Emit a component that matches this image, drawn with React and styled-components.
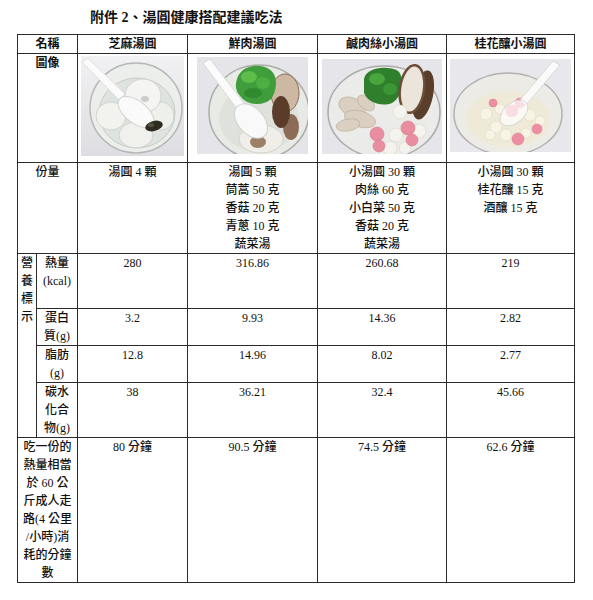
import styled, { createGlobalStyle } from 'styled-components';

const GlobalStyle = createGlobalStyle`
  body {
    margin: 0;
    background: #ffffff;
  }
`;

const Page = styled.div`
  padding: 8px 0 16px 17px;
  color: #111;
  font-family: "Liberation Serif", "Noto Sans CJK TC", serif;
`;

const Title = styled.h1`
  margin: 0 0 6px 73px;
  font-size: 14px;
  line-height: 20px;
  font-weight: 700;
`;

const Table = styled.table`
  border-collapse: collapse;
  table-layout: fixed;
  width: 557px;
`;

const Row = styled.tr`
  height: ${p => p.$h}px;
`;

const Cell = styled.td`
  border: 1px solid #2b2b2b;
  padding: 0 2px;
  vertical-align: top;
  text-align: center;
  font-size: 12px;
  line-height: 18px;
  font-weight: 500;
  white-space: nowrap;
`;

const HeadCell = styled(Cell)`
  vertical-align: middle;
  font-weight: 700;
`;

const PicCell = styled(Cell)`
  padding: ${p => p.$top}px 0 0;
`;

const Pic = styled.svg`
  display: block;
  margin: 0 auto;
`;

// ---- drawings of the four bowls ----

const SesameBowl = () => (
  <Pic width="103" height="100" viewBox="0 0 103 100">
    <defs>
      <linearGradient id="bg1" x1="0" y1="0" x2="0" y2="1">
        <stop offset="0" stopColor="#f1f1f3" />
        <stop offset="1" stopColor="#dedee2" />
      </linearGradient>
    </defs>
    <rect width="103" height="100" fill="url(#bg1)" />
    <ellipse cx="55" cy="52" rx="46" ry="45" fill="#eceeeb" stroke="#b5b9b6" strokeWidth="1.5" />
    <ellipse cx="56" cy="57" rx="38" ry="35" fill="#dfe3df" stroke="#c7cbc7" />
    <ellipse cx="30" cy="60" rx="15" ry="14" fill="#f2f3ef" stroke="#cfd3ce" />
    <ellipse cx="55" cy="79" rx="17" ry="13" fill="#f0f1ed" stroke="#cfd3ce" />
    <ellipse cx="80" cy="60" rx="13" ry="14" fill="#eef0ec" stroke="#cfd3ce" />
    <ellipse cx="62" cy="40" rx="18" ry="17" fill="#f4f5f2" stroke="#cfd3ce" />
    <ellipse cx="64" cy="43" rx="4" ry="3" fill="#c9cec9" />
    <path d="M1 6 L7 2 L44 38 L38 44 Z" fill="#fbfbfb" stroke="#d6d6d6" strokeWidth="0.8" />
    <ellipse cx="55" cy="56" rx="21" ry="11" transform="rotate(38 55 56)" fill="#fafafa" stroke="#d2d2d2" />
    <ellipse cx="73" cy="70" rx="9" ry="5" transform="rotate(-15 73 70)" fill="#2e2b23" />
    <ellipse cx="70" cy="69" rx="3" ry="2" fill="#56503f" />
  </Pic>
);

const PorkBowl = () => (
  <Pic width="111" height="97" viewBox="0 0 111 97">
    <rect width="111" height="97" fill="#e5e5e9" />
    <ellipse cx="62" cy="55" rx="50" ry="47" fill="#e8eae5" stroke="#a9ada8" strokeWidth="1.5" />
    <ellipse cx="62" cy="62" rx="40" ry="33" fill="#dfe2dc" />
    <ellipse cx="88" cy="36" rx="14" ry="19" fill="#cdb8a3" stroke="#8a6b55" />
    <ellipse cx="94" cy="70" rx="8" ry="13" fill="#8c6c57" />
    <ellipse cx="84" cy="55" rx="9" ry="16" fill="#5b3b29" />
    <path d="M40 22 C44 8 62 6 72 12 C82 18 80 34 74 42 C66 50 50 48 44 40 C38 34 38 28 40 22 Z" fill="#3f9e3b" />
    <ellipse cx="52" cy="20" rx="8" ry="6" fill="#5cbd4b" />
    <ellipse cx="66" cy="26" rx="7" ry="6" fill="#4bb040" />
    <ellipse cx="56" cy="36" rx="9" ry="5" fill="#2f8a2f" />
    <ellipse cx="64" cy="82" rx="22" ry="14" fill="#efeee8" stroke="#d3d2cb" />
    <ellipse cx="61" cy="85" rx="8" ry="6" fill="#9c8068" />
    <path d="M6 6 L13 2 L50 50 L43 56 Z" fill="#fbfbfb" stroke="#d4d4d4" strokeWidth="0.8" />
    <ellipse cx="54" cy="64" rx="20" ry="13" transform="rotate(48 54 64)" fill="#f9f9f9" stroke="#d0d0d0" />
  </Pic>
);

const ShreddedBowl = () => (
  <Pic width="120" height="95" viewBox="0 0 120 95">
    <rect width="120" height="95" fill="#e6e6ea" />
    <ellipse cx="62" cy="53" rx="56" ry="46" fill="#ebebe9" stroke="#a8aba9" strokeWidth="1.5" />
    <g fill="#dacfc0" stroke="#b9ab98" strokeWidth="0.6">
      <ellipse cx="30" cy="48" rx="14" ry="9" transform="rotate(25 30 48)" />
      <ellipse cx="38" cy="60" rx="16" ry="8" transform="rotate(15 38 60)" />
      <ellipse cx="26" cy="66" rx="12" ry="6" transform="rotate(-10 26 66)" />
      <ellipse cx="44" cy="44" rx="10" ry="6" transform="rotate(40 44 44)" />
    </g>
    <path d="M42 20 C44 8 66 6 76 12 C84 20 80 38 70 44 C60 48 46 44 42 34 Z" fill="#2f7f2c" />
    <ellipse cx="55" cy="20" rx="8" ry="6" fill="#4aa53d" />
    <ellipse cx="68" cy="30" rx="7" ry="6" fill="#3c9634" />
    <ellipse cx="101" cy="36" rx="10" ry="25" transform="rotate(12 101 36)" fill="#5a3e2c" />
    <ellipse cx="90" cy="30" rx="12" ry="24" transform="rotate(8 90 30)" fill="#ebe5dc" stroke="#6e4d37" strokeWidth="2.5" />
    <g fill="#f4f3ee" stroke="#d6d3c8" strokeWidth="0.6">
      <circle cx="78" cy="53" r="7" />
      <circle cx="74" cy="76" r="7" />
      <circle cx="97" cy="72" r="7" />
      <circle cx="68" cy="89" r="7" />
      <circle cx="83" cy="89" r="6" />
    </g>
    <g fill="#e98ea1" stroke="#d3788b" strokeWidth="0.6">
      <circle cx="55" cy="75" r="7" />
      <circle cx="57" cy="87" r="6" />
      <circle cx="86" cy="69" r="7" />
      <circle cx="90" cy="81" r="6" />
    </g>
  </Pic>
);

const OsmanthusBowl = () => (
  <Pic width="121" height="93" viewBox="0 0 121 93">
    <rect width="121" height="93" fill="#e7e7ec" />
    <ellipse cx="58" cy="55" rx="54" ry="41" fill="#ecebe6" stroke="#b1b1af" strokeWidth="1.5" />
    <ellipse cx="58" cy="60" rx="42" ry="28" fill="#efe9d8" />
    <g fill="#f7f4e6" stroke="#ddd6bf" strokeWidth="0.5">
      <circle cx="36" cy="55" r="6" />
      <circle cx="46" cy="68" r="6" />
      <circle cx="50" cy="50" r="5" />
      <circle cx="80" cy="56" r="6" />
      <circle cx="90" cy="62" r="5" />
      <circle cx="56" cy="76" r="6" />
      <circle cx="76" cy="74" r="5" />
      <circle cx="40" cy="76" r="5" />
    </g>
    <g fill="#ee8ea3" stroke="#d97a8f" strokeWidth="0.5">
      <circle cx="62" cy="52" r="6" />
      <circle cx="70" cy="44" r="5" />
      <circle cx="87" cy="70" r="5" />
      <circle cx="68" cy="80" r="6" />
      <circle cx="43" cy="44" r="4" />
    </g>
    <path d="M103 2 L110 6 L76 46 L70 41 Z" fill="#fbfbfb" stroke="#d2d2d2" strokeWidth="0.8" fillOpacity="0.95" />
    <ellipse cx="64" cy="54" rx="16" ry="10" transform="rotate(-40 64 54)" fill="#ffffff" fillOpacity="0.7" stroke="#d8d8d8" />
  </Pic>
);

const bowls = [
  { name: '芝麻湯圓', Art: SesameBowl, top: 2, portion: ['湯圓 4 顆'], kcal: '280', protein: '3.2', fat: '12.8', carb: '38', walk: '80 分鐘' },
  { name: '鮮肉湯圓', Art: PorkBowl, top: 3, portion: ['湯圓 5 顆', '茼蒿 50 克', '香菇 20 克', '青蔥 10 克', '蔬菜湯'], kcal: '316.86', protein: '9.93', fat: '14.96', carb: '36.21', walk: '90.5 分鐘' },
  { name: '鹹肉絲小湯圓', Art: ShreddedBowl, top: 5, portion: ['小湯圓 30 顆', '肉絲 60 克', '小白菜 50 克', '香菇 20 克', '蔬菜湯'], kcal: '260.68', protein: '14.36', fat: '8.02', carb: '32.4', walk: '74.5 分鐘' },
  { name: '桂花釀小湯圓', Art: OsmanthusBowl, top: 5, portion: ['小湯圓 30 顆', '桂花釀 15 克', '酒釀 15 克'], kcal: '219', protein: '2.82', fat: '2.77', carb: '45.66', walk: '62.6 分鐘' },
];

const Lines = ({ lines }) => lines.map((t, i) => <div key={i}>{t}</div>);

const App = () => (
  <Page>
    <GlobalStyle />
    <Title>附件 2、湯圓健康搭配建議吃法</Title>
    <Table>
      <colgroup>
        <col style={{ width: 19 }} />
        <col style={{ width: 41 }} />
        <col style={{ width: 110 }} />
        <col style={{ width: 130 }} />
        <col style={{ width: 129 }} />
        <col style={{ width: 128 }} />
      </colgroup>
      <tbody>
        <Row $h={18}>
          <HeadCell colSpan={2}>名稱</HeadCell>
          {bowls.map(b => <HeadCell key={b.name}>{b.name}</HeadCell>)}
        </Row>
        <Row $h={109}>
          <Cell colSpan={2} style={{ fontWeight: 700 }}>圖像</Cell>
          {bowls.map(({ name, Art, top }) => (
            <PicCell key={name} $top={top}><Art /></PicCell>
          ))}
        </Row>
        <Row $h={90}>
          <Cell colSpan={2}>份量</Cell>
          {bowls.map(b => <Cell key={b.name}><Lines lines={b.portion} /></Cell>)}
        </Row>
        <Row $h={55}>
          <Cell rowSpan={4}><Lines lines={['營', '養', '標', '示']} /></Cell>
          <Cell><Lines lines={['熱量', '(kcal)']} /></Cell>
          {bowls.map(b => <Cell key={b.name}>{b.kcal}</Cell>)}
        </Row>
        <Row $h={36}>
          <Cell><Lines lines={['蛋白', '質(g)']} /></Cell>
          {bowls.map(b => <Cell key={b.name}>{b.protein}</Cell>)}
        </Row>
        <Row $h={35}>
          <Cell><Lines lines={['脂肪', '(g)']} /></Cell>
          {bowls.map(b => <Cell key={b.name}>{b.fat}</Cell>)}
        </Row>
        <Row $h={54}>
          <Cell><Lines lines={['碳水', '化合', '物(g)']} /></Cell>
          {bowls.map(b => <Cell key={b.name}>{b.carb}</Cell>)}
        </Row>
        <Row $h={144}>
          <Cell colSpan={2}>
            <Lines lines={['吃一份的', '熱量相當', '於 60 公', '斤成人走', '路(4 公里', '/小時)消', '耗的分鐘', '數']} />
          </Cell>
          {bowls.map(b => <Cell key={b.name}>{b.walk}</Cell>)}
        </Row>
      </tbody>
    </Table>
  </Page>
);

export default App;
